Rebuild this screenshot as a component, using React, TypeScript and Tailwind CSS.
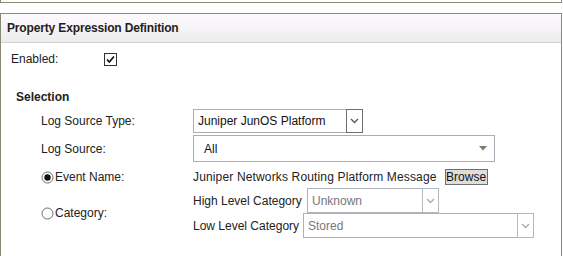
import React from "react";

function Chevron({ color }: { color: string }) {
  return (
    <svg width="9" height="6" viewBox="0 0 9 6">
      <path d="M1 1 L4.5 4.5 L8 1" fill="none" stroke={color} strokeWidth="1.3" />
    </svg>
  );
}

function Radio({ checked }: { checked?: boolean }) {
  return (
    <svg width="13" height="13" viewBox="0 0 13 13" className="shrink-0">
      <circle cx="6.5" cy="6.5" r="5.5" fill="white" stroke="#6a6a6a" strokeWidth="1" />
      {checked && <circle cx="6.5" cy="6.5" r="3.2" fill="#111" />}
    </svg>
  );
}

export default function App() {
  return (
    <div className="w-[563px] h-[256px] bg-white overflow-hidden text-[12px] leading-[14px] text-[#222] font-['Liberation_Sans',Arial,sans-serif]">
      <div className="h-[3px] w-[562px] border-x border-b border-[#8a8a72]" />
      <div className="mt-[10px] w-[562px] h-[243px] border-x border-t border-[#8a8a72]">
        <div className="h-[29px] border-b border-[#d2d2d2] bg-gradient-to-b from-[#fefbfe] via-[#f6f4f6] to-[#ececec] flex items-center pl-[6px] font-bold tracking-[-0.15px] text-[#222]">
          Property Expression Definition
        </div>
        <div className="mt-[9px] flex items-center h-[14px] pl-[10px]">
          <span className="w-[93px]">Enabled:</span>
          <svg width="13" height="13" viewBox="0 0 13 13">
            <rect x="0.5" y="0.5" width="12" height="12" fill="white" stroke="#333" />
            <path d="M3 6.5 L5.3 9 L10 3.5" fill="none" stroke="#111" strokeWidth="1.8" />
          </svg>
        </div>
        <div className="mt-[24px] pl-[15px] h-[14px] font-bold">Selection</div>
        <div className="mt-[5px] pl-[40px]">
          <div className="flex items-center h-[24px]">
            <span className="w-[152px]">Log Source Type:</span>
            <div className="w-[170px] h-[24px] border border-[#a7aeb7] flex items-center">
              <span className="flex-1 pl-[4px] text-[#111]">Juniper JunOS Platform</span>
              <div className="w-[17px] h-[24px] -mr-px border border-[#6e6e6e] flex items-center justify-center bg-white">
                <Chevron color="#555" />
              </div>
            </div>
          </div>
          <div className="mt-[2px] flex items-center h-[27px]">
            <span className="w-[152px]">Log Source:</span>
            <div className="w-[302px] h-[27px] border border-[#a7aeb7] flex items-center">
              <span className="flex-1 pl-[10px] text-[#111]">All</span>
              <svg width="8" height="5" viewBox="0 0 8 5" className="mr-[7px]">
                <path d="M0 0 L8 0 L4 4.5 Z" fill="#7a7a7a" />
              </svg>
            </div>
          </div>
          <div className="mt-[4px] flex items-center h-[22px]">
            <span className="w-[152px] flex items-center">
              <Radio checked />
              <span className="ml-[1px]">Event Name:</span>
            </span>
            <span className="tracking-[0.15px]">Juniper Networks Routing Platform Message</span>
            <span className="ml-[8px] h-[16px] w-[43px] border border-[#6f6f6f] bg-[#dddddd] flex items-center justify-center text-[#111]">
              Browse
            </span>
          </div>
          <div className="flex">
            <div className="w-[152px] flex items-center">
              <Radio />
              <span className="ml-[1px]">Category:</span>
            </div>
            <div>
              <div className="flex items-center h-[25px]">
                <span className="w-[114px]">High Level Category</span>
                <div className="w-[132px] h-[25px] border border-[#abb2ba] flex items-center">
                  <span className="flex-1 pl-[4px] text-[#777]">Unknown</span>
                  <div className="w-[17px] h-[25px] -mr-px border border-[#b3b9c0] flex items-center justify-center bg-white">
                    <Chevron color="#aaa" />
                  </div>
                </div>
              </div>
              <div className="flex items-center h-[25px]">
                <span className="w-[110px]">Low Level Category</span>
                <div className="w-[231px] h-[25px] border border-[#abb2ba] flex items-center">
                  <span className="flex-1 pl-[4px] text-[#777]">Stored</span>
                  <div className="w-[17px] h-[25px] -mr-px border border-[#b3b9c0] flex items-center justify-center bg-white">
                    <Chevron color="#aaa" />
                  </div>
                </div>
              </div>
            </div>
          </div>
        </div>
      </div>
    </div>
  );
}
